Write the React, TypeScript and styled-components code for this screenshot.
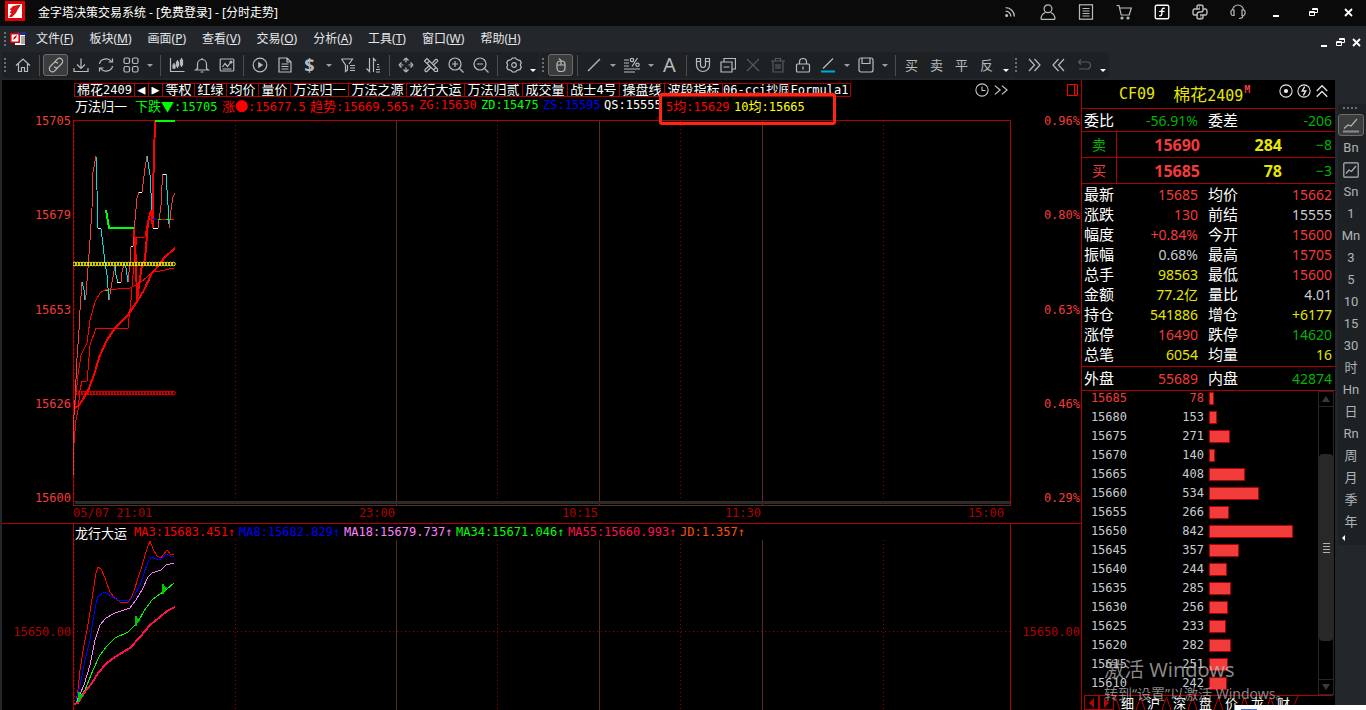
import React from "react";
import styled, { createGlobalStyle, css } from "styled-components";
import { SquareFunction } from "lucide-react";

const CJK = '"Noto Sans CJK SC", sans-serif';
const UI = `"Noto Sans", ${CJK}`;
const MONO = '"DejaVu Sans Mono", "Noto Sans CJK SC", monospace';

const color = {
  line: "#b00000",
  brown: "#5a2d20",
  red: "#f23c3c",
  pure: "#ff0000",
  green: "#00b400",
  lime: "#00ff00",
  yellow: "#e6e600",
  white: "#ffffff",
  silver: "#c8ccd0",
  icon: "#b9bcbf",
  bar: "#23272b",
  group: "#1d2124",
};

const GlobalStyle = createGlobalStyle`
  *, *::before, *::after { box-sizing: border-box; }
  body { margin: 0; background: ${color.bar}; color: #fff; font-family: ${UI}; font-size: 12px; }
  button { font: inherit; color: inherit; background: none; border: 0; padding: 0; margin: 0; cursor: default; }
`;

/* ---------- shell ---------- */

const Shell = styled.div`
  position: relative;
  display: flex;
  flex-direction: column;
  height: 100vh;
  overflow: hidden;
`;

const TitleBar = styled.header`
  display: flex;
  align-items: center;
  height: 26px;
  flex: none;
  padding-left: 5px;
  background: #0a0a0a;
`;

const Title = styled.h1`
  margin: 0 auto 0 13px;
  font: 12px/24px ${UI};
`;

const Logo = styled.svg`
  width: 20px;
  height: 20px;
  margin-bottom: 4px;
`;

const WindowButton = styled.button<{ $w?: number; $bright?: boolean }>`
  display: flex;
  align-items: center;
  justify-content: center;
  width: ${(p) => p.$w ?? 38}px;
  height: 24px;
  margin-bottom: 2px;
  color: ${(p) => (p.$bright ? "#fff" : "#b9bcbf")};
`;

const MenuBar = styled.nav`
  display: flex;
  align-items: center;
  flex: none;
  height: 26px;
  padding: 0 2px;
`;

const MenuItem = styled.button`
  font: 12px/24px ${UI};
  color: #e4e6e8;
  margin-right: 16px;
  white-space: nowrap;
`;

const MenuIcon = styled.svg`
  width: 16px;
  height: 14px;
  margin-right: 10px;
`;

const MdiButtons = styled.div`
  display: flex;
  margin-left: auto;
  padding-top: 7px;
`;

const Toolbar = styled.div`
  display: flex;
  flex: none;
  gap: 1px;
  height: 28px;
  padding-left: 2px;
`;

const ToolGroup = styled.div`
  display: flex;
  align-items: center;
  height: 26px;
  border-radius: 4px;
  background: ${color.group};
`;

const Grip = styled.span`
  flex: none;
  width: 8px;
  height: 14px;
  background: radial-gradient(circle at 3px 1px, #6c7073 1px, transparent 1px) 0 0 / 8px 4px repeat-y;
`;

const ToolButton = styled.button<{ $active?: boolean; $dim?: boolean }>`
  display: flex;
  align-items: center;
  justify-content: center;
  flex: none;
  width: 25px;
  height: 22px;
  color: ${(p) => (p.$dim ? "#565a5d" : color.icon)};
  ${(p) =>
    p.$active &&
    css`
      background: #3b3c3c;
      border: 1px solid #6c6c6c;
      border-radius: 3px;
    `}
`;

const TextTool = styled(ToolButton)<{ $size?: number; $bold?: boolean }>`
  font: ${(p) => (p.$bold ? 700 : 400)} ${(p) => p.$size ?? 13}px/22px ${UI};
`;

const CaretButton = styled.button<{ $low?: boolean }>`
  display: flex;
  align-items: ${(p) => (p.$low ? "flex-end" : "center")};
  justify-content: center;
  flex: none;
  width: 13px;
  height: 20px;
  &::after {
    content: "";
    border: 3px solid transparent;
    border-top-color: ${(p) => (p.$low ? "#fff" : "#9da0a3")};
    border-bottom: 0;
    margin-bottom: ${(p) => (p.$low ? 3 : 0)}px;
  }
`;

const Divider = styled.span`
  flex: none;
  width: 8px;
  height: 21px;
  background: linear-gradient(#4a4d50, #4a4d50) center / 1px 100% no-repeat;
`;

const Workspace = styled.div`
  display: flex;
  flex: 1;
  min-height: 0;
  padding-left: 2px;
`;

/* ---------- charts ---------- */

const ChartColumn = styled.main`
  display: flex;
  flex-direction: column;
  flex: 1;
  min-width: 0;
  background: #000;
  font: 12px/14px ${MONO};
`;

const TabStrip = styled.div`
  display: flex;
  align-items: center;
  height: 18px;
  flex: none;
  padding: 2px 2px 0 72px;
`;

const FormulaTab = styled.button<{ $w: number }>`
  flex: none;
  width: ${(p) => p.$w}px;
  height: 14px;
  overflow: hidden;
  border: 1px solid ${color.line};
  border-left-width: 0;
  color: #fff;
  font: 13px/12px ${MONO};
  text-align: center;
  white-space: nowrap;
  &:first-child {
    border-left-width: 1px;
  }
`;

const Latin = styled.span`
  font: 12px/12px ${MONO};
`;

const ToolIcon = styled.button<{ $light?: boolean }>`
  display: flex;
  align-items: center;
  height: 13px;
  color: ${(p) => (p.$light ? "#e8e8e8" : "#c8c8c8")};
`;

const TabTools = styled.div`
  display: flex;
  align-items: center;
  gap: 5px;
  margin-left: auto;
  padding-right: 59px;
`;

const LegendRow = styled.div`
  display: flex;
  flex: none;
  height: 16px;
  padding-left: 73px;
  white-space: nowrap;
`;

const LegendItem = styled.span<{ $w: number; $c: string }>`
  flex: none;
  width: ${(p) => p.$w}px;
  color: ${(p) => p.$c};
  font: 12px/15px ${MONO};
`;

const Han = styled.span`
  font: 13px/15px ${CJK};
`;

const Plot = styled.section`
  display: grid;
  grid-template-columns: 71px minmax(0, 1fr) 70px;
  flex: none;
`;

const Scale = styled.div<{ $end?: boolean }>`
  display: flex;
  flex-direction: column;
  justify-content: space-between;
  align-items: flex-end;
  height: 391px;
  padding-right: ${(p) => (p.$end ? 1 : 2)}px;
  color: ${color.red};
`;

const LowerScale = styled.div<{ $end?: boolean }>`
  padding: 101px ${(p) => (p.$end ? 1 : 2)}px 0 0;
  text-align: right;
  color: ${color.line};
`;

const UpperSvg = styled.svg`
  display: block;
  width: 100%;
  height: 392px;
`;

const LowerSvg = styled.svg`
  display: block;
  width: 100%;
  height: 170px;
`;

const LowerFrame = styled.div`
  border: solid ${color.line};
  border-width: 0 1px;
`;

const LowerPlot = styled(Plot)`
  border-top: 1px solid ${color.line};
`;

const LowerLegend = styled(LegendRow)`
  padding: 1px 0 0 1px;
`;

const TimeAxis = styled.div`
  display: grid;
  grid-template-columns: 322fr 203fr 163fr 243fr 7fr;
  flex: none;
  height: 17px;
  margin: 0 70px 0 71px;
  color: ${color.line};
  text-align: right;
  line-height: 15px;
`;

const TimeSpan = styled.div`
  display: flex;
  justify-content: space-between;
`;

/* ---------- quote panel ---------- */

const QuotePanel = styled.aside`
  display: flex;
  flex-direction: column;
  flex: none;
  width: 254px;
  background: #000;
  border-left: 1px solid ${color.line};
`;

const QuoteHead = styled.div`
  display: flex;
  align-items: flex-start;
  height: 29px;
  flex: none;
  padding: 4px 6px 0 37px;
  border-bottom: 1px solid ${color.line};
  color: ${color.yellow};
  font: 15px/20px ${MONO};
`;

const QuoteName = styled.span`
  margin-left: 18px;
  white-space: nowrap;
`;

const BigHan = styled.span`
  font: 17px/20px ${CJK};
`;

const MainMark = styled.sup`
  color: ${color.red};
  font: 700 10px/10px ${MONO};
  margin: 1px 0 0 1px;
`;

const HeadTools = styled.div`
  display: flex;
  gap: 4px;
  margin-left: auto;
`;

const QuoteTable = styled.table<{ $pad?: number }>`
  width: 100%;
  flex: none;
  table-layout: fixed;
  border-collapse: separate;
  border-spacing: 0;
  border-bottom: 1px solid ${color.line};
  padding: 0 0 ${(p) => p.$pad ?? 0}px;
`;

const Label = styled.th<{ $h: number; $second?: boolean }>`
  width: ${(p) => (p.$second ? 52 : 44)}px;
  height: ${(p) => p.$h}px;
  padding: 0 0 0 ${(p) => (p.$second ? 10 : 2)}px;
  color: #fff;
  font: 15px/20px ${CJK};
  text-align: left;
  white-space: nowrap;
`;

const Value = styled.td<{ $c: string; $end?: boolean }>`
  padding: 1px ${(p) => (p.$end ? 3 : 0)}px 0 0;
  width: ${(p) => (p.$end ? "auto" : "72px")};
  color: ${(p) => p.$c};
  font: 14px/18px ${UI};
  text-align: right;
  white-space: nowrap;
`;

const Side = styled.th<{ $c: string }>`
  width: 35px;
  height: 25px;
  padding: 0 0 2px;
  border-right: 1px solid ${color.line};
  color: ${(p) => p.$c};
  font: 14px/20px ${CJK};
`;

const Price = styled.td<{ $c: string; $w: number }>`
  width: ${(p) => p.$w}px;
  padding: 0;
  color: ${(p) => p.$c};
  font: 700 16px/20px ${UI};
  text-align: right;
`;

const DepthArea = styled.div`
  display: flex;
  flex: 1;
  min-height: 0;
  overflow: hidden;
`;

const DepthClip = styled.div`
  display: flex;
  align-items: flex-end;
  flex: 1;
  overflow: hidden;
  padding-bottom: 2px;
`;

const DepthTable = styled.table`
  width: 100%;
  table-layout: fixed;
  border-collapse: collapse;
  font: 12px/19px ${MONO};
`;

const DepthCell = styled.td<{ $w?: number; $c: string }>`
  width: ${(p) => (p.$w ? `${p.$w}px` : "auto")};
  height: 19px;
  padding: 0 0 0 5px;
  color: ${(p) => p.$c};
  text-align: right;
  &:first-child {
    padding-left: 0;
  }
`;

const DepthBar = styled.div`
  height: 13px;
  border: 1px solid ${color.line};
  background: ${color.red};
`;

const ScrollTrack = styled.div`
  display: flex;
  flex-direction: column;
  flex: none;
  width: 16px;
  margin-right: 1px;
  border: 1px solid #262626;
`;

const ScrollButton = styled.button<{ $down?: boolean }>`
  display: flex;
  align-items: center;
  justify-content: center;
  flex: none;
  height: 15px;
  border: 0 solid #262626;
  border-width: ${(p) => (p.$down ? "1px 0 0" : "0 0 1px")};
  &::after {
    content: "";
    border: 4px solid transparent;
    ${(p) => (p.$down ? "border-top: 6px solid #3a3a3a; border-bottom: 0;" : "border-bottom: 6px solid #3a3a3a; border-top: 0;")}
  }
`;

const ScrollRail = styled.div`
  display: flex;
  flex-direction: column;
  flex: 1;
  padding: 47px 0 38px;
`;

const Thumb = styled.div`
  display: flex;
  align-items: center;
  justify-content: center;
  flex: 1;
  border-radius: 4px;
  background: #282828;
  &::after {
    content: "";
    width: 7px;
    height: 10px;
    background: repeating-linear-gradient(#b0b0b0 0 1px, transparent 1px 3px);
  }
`;

const SheetTabs = styled.div`
  display: flex;
  flex: none;
  height: 15px;
  margin: 0 2px;
  border-top: 1px solid ${color.line};
  overflow: hidden;
`;

const SheetArrow = styled.button<{ $right?: boolean }>`
  display: flex;
  align-items: center;
  justify-content: center;
  flex: none;
  width: 15px;
  border: 1px solid ${color.line};
  border-top: 0;
  &::after {
    content: "";
    border: 5px solid transparent;
    ${(p) => (p.$right ? "border-left-color: #c00000; border-right: 0;" : "border-right-color: #c00000; border-left: 0;")}
  }
`;

const SheetTab = styled.button`
  flex: none;
  width: 13px;
  font: 13px/14px ${CJK};
`;

const SheetEdge = styled.svg<{ $w?: number }>`
  flex: none;
  width: ${(p) => p.$w ?? 13}px;
  height: 14px;
`;

/* ---------- period sidebar ---------- */

const SideBar = styled.nav`
  flex: none;
  width: 31px;
  padding: 24px 0 0 3px;
  background: ${color.bar};
`;

const PeriodGroup = styled.div`
  display: flex;
  flex-direction: column;
  height: 441px;
  border-radius: 4px 0 0 4px;
  background: ${color.group};
`;

const PeriodGrip = styled.span`
  flex: none;
  width: 16px;
  height: 4px;
  margin: 2px 0 4px 5px;
  background: radial-gradient(circle at 1px 2px, #6c7073 1px, transparent 1px) 0 0 / 4px 4px repeat-x;
`;

const Period = styled.button<{ $active?: boolean }>`
  display: flex;
  align-items: center;
  justify-content: center;
  flex: none;
  width: 26px;
  height: 22px;
  padding-top: 1px;
  color: #b0b3b6;
  font: 13px/21px Roboto, ${CJK};
  ${(p) =>
    p.$active &&
    css`
      padding: 0;
      background: #3b3c3c;
      border: 1px solid #6c6c6c;
      border-radius: 3px;
    `}
`;

const Collapse = styled.button`
  align-self: flex-start;
  width: 8px;
  height: 11px;
  margin-left: 4px;
  &::after {
    content: "";
    display: block;
    width: 0;
    border: 3px solid transparent;
    border-right-color: #fff;
    border-left: 0;
  }
`;

/* ---------- overlays ---------- */

const Highlight = styled.div`
  position: absolute;
  left: 659px;
  top: 93px;
  width: 177px;
  height: 32px;
  border: 3px solid #ff2414;
  border-radius: 3px;
  pointer-events: none;
`;

const Watermark = styled.div`
  position: absolute;
  right: 72px;
  bottom: 5px;
  width: 190px;
  color: rgba(190, 190, 190, 0.72);
  font: 14px/22px ${UI};
  white-space: nowrap;
  pointer-events: none;
`;

const WatermarkTitle = styled.div`
  font: 20px/26px ${UI};
`;

const Popup = styled.div`
  position: absolute;
  right: 0;
  bottom: 0;
  width: 131px;
  height: 5px;
  padding: 4px 0 0 6px;
  background: #fff;
  &::after {
    content: "";
    display: block;
    width: 16px;
    height: 1px;
    background: #2f6fed;
  }
`;

/* ---------- icons ---------- */

const Glyph = ({ size = 16, w = 1.2, children }: { size?: number; w?: number; children: React.ReactNode }) => (
  <svg width={size} height={size} viewBox="0 0 16 16" fill="none" stroke="currentColor" strokeWidth={w} aria-hidden="true">
    {children}
  </svg>
);

const icons: Record<string, React.ReactNode> = {
  home: <path d="M1 8.500 8 2l7 6.500M3.500 7v7.500H6.500v-4h3v4h3V7" />,
  link: (
    <g strokeLinecap="round">
      <path d="M7 4.500 9.300 2.200a3 3 0 0 1 4.500 4.300L10.500 9.800a3 3 0 0 1-4 .2" />
      <path d="M9 11.500 6.700 13.800a3 3 0 0 1-4.500-4.300L5.500 6.200a3 3 0 0 1 4-.2" />
    </g>
  ),
  download: <path d="M8 1.500v9.500M4 7.500l4 4 4-4M1 11v3.500h14V11" />,
  refresh: <path d="M1.500 7A6.500 5.500 0 0 1 13.500 4.500M14.500 1.500v3.500h-4M14.500 9A6.500 5.500 0 0 1 2.500 11.500M1.500 14.500V11h4" />,
  grid: (
    <>
      <rect x="1" y="1" width="5.500" height="5.500" rx="1.500" />
      <rect x="9.500" y="1" width="5.500" height="5.500" rx="1.500" />
      <rect x="1" y="9.500" width="5.500" height="5.500" rx="1.500" />
      <rect x="9.500" y="9.500" width="5.500" height="5.500" rx="1.500" />
    </>
  ),
  candles: (
    <>
      <path d="M1.500 1v13.500H15.500M5 6v6M8.500 3v8M12.500 1v9" />
      <path d="M4 8h2v3H4zM7.500 5h2v4h-2zM11.500 3h2v5h-2z" fill="currentColor" />
    </>
  ),
  bell: <path d="M3.500 11.500V7a4.500 4.500 0 0 1 9 0v4.500l2 1.500h-13zM6.500 15h3M8 1v1.500" />,
  chartBox: (
    <>
      <rect x="1.200" y="2" width="13.600" height="12" rx="1" />
      <path d="M3.500 10 6 6.500l2.500 3L12 5M3.500 12h9" />
      <circle cx="12" cy="5" r="1" fill="currentColor" />
    </>
  ),
  play: (
    <>
      <circle cx="8" cy="8" r="6.800" />
      <path d="M6.200 4.800v6.400L11.200 8z" fill="currentColor" stroke="none" />
    </>
  ),
  doc: <path d="M2 1h8l4 4v10H2zM10 1v4h4M4.500 7h7M4.500 9.500h7M4.500 12h7" />,
  filter: <path d="M1.500 2h11L9 7M1.500 2 5.500 8v6.500l2-1.500V8M10 8.500h5M10 11h5M10 13.500h5" />,
  sort: <path d="M4.500 1v13.500L1.500 11.500M8.500 15V1.500L11 4M12 7.500h2M12 10h2.500M11 12.500h4M11 15h4" />,
  move: (
    <>
      <path d="M8 1 5.500 3.500M8 1l2.500 2.500M8 15l-2.500-2.500M8 15l2.500-2.500M1 8l2.500-2.500M1 8l2.500 2.500M15 8l-2.500-2.500M15 8l-2.500 2.500" />
      <path d="M8 2v3.500M8 10.500V14M2 8h3.500M10.500 8H14" />
    </>
  ),
  pencils: (
    <>
      <path d="M1.500 4 4 1.500 14.500 12v2.500H12zM4 6.500 6 4.500M10.500 13l2.500-2.500" />
      <path d="M9.500 6 12.500 2.500a1.500 1.500 0 0 1 2 2L10.500 8M6.500 8.500 2 12.500a1.500 1.500 0 0 0 2 2L8 10" />
    </>
  ),
  zoomIn: <><circle cx="7" cy="7" r="6" /><path d="M11.500 11.500 15.500 15.500M4 7h6M7 4v6" /></>,
  zoomOut: <><circle cx="7" cy="7" r="6" /><path d="M11.500 11.500 15.500 15.500M4 7h6" /></>,
  gear: (
    <>
      <path d="M5.500 2.200 6.500 1h3l1 1.200 2 1 1.500.2 1.300 2.500-.8 1.300v1.600l.8 1.300-1.300 2.500-1.500.2-2 1-1 1.200h-3l-1-1.200-2-1L2 12.600.7 10.100l.8-1.300V7.200L.7 5.900 2 3.400l1.500-.2z" strokeLinejoin="round" />
      <circle cx="8" cy="8" r="2.300" />
    </>
  ),
  mouse: <><rect x="4" y="4" width="8" height="10.500" rx="3.500" /><path d="M8 4v4M4 8h8M8 4c0-2-1.500-1-2-2.500" /></>,
  line: <path d="M2 14 14 2" />,
  percent: (
    <>
      <path d="M0 3h5M0 6h5M0 9h5M0 12h16M0 15h11M13.500 1 8 9.500" />
      <circle cx="8" cy="3" r="1.700" />
      <circle cx="13.500" cy="7.800" r="1.700" />
    </>
  ),
  magnet: <path d="M1.500 1.500h4V8a2.500 2.500 0 0 0 5 0V1.500h4V8a6.500 6.500 0 0 1-13 0zM1.500 4.500h4M10.500 4.500h4" />,
  layers: <path d="M1 5h11v10H1zM4 5V1.500h11.500V12H12M3.500 10h6" />,
  cross: <path d="M2 2l12 12M14 2 2 14" />,
  trash: <path d="M1 4h14M5.500 4V1.500h5V4M3 4v11h10V4M6 7v5M8 7v5M10 7v5" />,
  lock: <><rect x="1.500" y="7" width="13" height="8" rx="1" /><path d="M4.500 7V5a3.500 3.500 0 0 1 7 0v2M8 9.500v3" /></>,
  pen: <><path d="M3 11.500 13 1.500" /><path d="M1 14.500h14" stroke="#00a8e0" strokeWidth="2" /></>,
  save: <><rect x="1" y="1" width="14" height="14" rx="2" /><path d="M4 1v5.500h8V1" /></>,
  right: <path d="M3 2l5.500 6L3 14M8.500 2 14 8l-5.500 6" />,
  left: <path d="M13 2 7.500 8l5.500 6M7.500 2 2 8l5.500 6" />,
  undo: <path d="M5 2.500 2.500 5 5 7.500M2.500 5H11a3.500 3.500 0 0 1 0 7H3" />,
  rss: <><path d="M3 3a10 10 0 0 1 10 10M3 7a6 6 0 0 1 6 6" /><circle cx="4.200" cy="12" r="1" fill="currentColor" /></>,
  user: <><circle cx="8" cy="4.800" r="3.900" /><path d="M1 15.300c0-4 2-6 4.500-6.800M15 15.300c0-4-2-6-4.500-6.800M1 15.300h14" /></>,
  list: <><rect x="1.500" y=".8" width="13" height="14.400" /><path d="M4.500 4.500h7M4.500 7h7M4.500 9.500h7M4.500 12h7" /></>,
  cart: <><path d="M.5 1.500H3l2.200 9.500h8L15.300 4H4" /><circle cx="6" cy="14" r="1" fill="currentColor" /><circle cx="12" cy="14" r="1" fill="currentColor" /></>,
  python: (
    <>
      <path d="M5 5V2.500C5 1 6 1 8 1s3 .3 3 1.500v4C11 8 10 8 8.500 8h-1C5.500 8 5 9 5 11H2.500C1 11 1 10 1 8s.3-3 1.500-3H8" />
      <path d="M11 11v2.500C11 15 10 15 8 15s-3-.3-3-1.500V11M11 5h2.500C15 5 15 6 15 8s-.3 3-1.500 3H8" />
      <path d="M7 3h.8M8.500 13h.8" />
    </>
  ),
  headset: <path d="M2.500 6.500a5.500 5.500 0 0 1 11 0M2 6h2v5.500H2.800A2 2 0 0 1 1 9.500v-2A1.500 1.500 0 0 1 2 6zM14 6h-2v5.500h1.200a2 2 0 0 0 1.800-2v-2A1.500 1.500 0 0 0 14 6zM13 11.500c0 2-2 3-4 3" />,
  clock: <><circle cx="8" cy="8" r="7" /><path d="M8 4v4.500h4" /></>,
  target: <><circle cx="8" cy="8" r="7" /><circle cx="8" cy="8" r="1.800" fill="currentColor" /></>,
  bolt: <><circle cx="8" cy="8" r="7" /><path d="M8.800 3 6 8h4L7.200 13" strokeWidth="1.600" /></>,
  up: <path d="M2 8l6-6 6 6M2 14.500l6-6 6 6" />,
  next: <path d="M1 3l6 5-6 5M9 3l6 5-6 5" />,
  trend: <><path d="M1 11.500 5 8l3 1 6-7" /><path d="M0 14.500h16" strokeWidth="2" stroke="#8a8d90" /></>,
  trendBox: <><rect x=".8" y=".8" width="14.400" height="14.400" rx="1" /><path d="M3 11.500 6 8l2.500 1.500L13 4" /></>,
};

const Tool = ({ name, label, active, dim }: { name: string; label: string; active?: boolean; dim?: boolean }) => (
  <ToolButton $active={active} $dim={dim} aria-label={label}>
    <Glyph>{icons[name]}</Glyph>
  </ToolButton>
);

const MinimizeMark = () => (
  <svg width="8" height="10" aria-hidden="true"><path d="M1 8h6v2H1z" fill="#fff" /></svg>
);
const RestoreMark = () => (
  <svg width="9" height="10" fill="none" stroke="#fff" aria-hidden="true">
    <path d="M.5 4.500h5v4h-5zM0 5.500h6M3.500 3V1.500h5v4H6M3 2.500h6" />
  </svg>
);
const CloseMark = () => (
  <svg width="9" height="10" stroke="#fff" strokeWidth="1.800" aria-hidden="true"><path d="M1 2l7 7M8 2 1 9" /></svg>
);

/* ---------- data ---------- */

const menus = [["文件", "F"], ["板块", "M"], ["画面", "P"], ["查看", "V"], ["交易", "O"], ["分析", "A"], ["工具", "T"], ["窗口", "W"], ["帮助", "H"]];

const formulaTabs: [React.ReactNode, number][] = [
  [<>棉花<Latin>2409</Latin></>, 61], ["◀", 14], ["▶", 14], ["等权", 32], ["红绿", 32], ["均价", 32], ["量价", 32], ["万法归一", 58],
  ["万法之源", 58], ["龙行大运", 58], ["万法归贰", 58], ["成交量", 45], [<>战士<Latin>4</Latin>号</>, 52], ["操盘线", 45], ["波段指标", 58],
  [<Latin>06-cci抄底</Latin>, 66], [<Latin>Formula1</Latin>, 62],
];

type QuoteLine = [string, string, string, string, string, string];
const quotes: QuoteLine[] = [
  ["最新", "15685", color.red, "均价", "15662", color.red],
  ["涨跌", "130", color.red, "前结", "15555", color.silver],
  ["幅度", "+0.84%", color.red, "今开", "15600", color.red],
  ["振幅", "0.68%", color.silver, "最高", "15705", color.red],
  ["总手", "98563", color.yellow, "最低", "15600", color.red],
  ["金额", "77.2亿", color.yellow, "量比", "4.01", color.silver],
  ["持仓", "541886", color.yellow, "增仓", "+6177", color.yellow],
  ["涨停", "16490", color.red, "跌停", "14620", color.green],
  ["总笔", "6054", color.yellow, "均量", "16", color.yellow],
];

const depth: [number, number, number][] = [
  [15685, 78, 5], [15680, 153, 8], [15675, 271, 21], [15670, 140, 6], [15665, 408, 36], [15660, 534, 50],
  [15655, 266, 20], [15650, 842, 84], [15645, 357, 30], [15640, 244, 18], [15635, 285, 22], [15630, 256, 19],
  [15625, 233, 17], [15620, 282, 22], [15615, 251, 19], [15610, 242, 18],
];

const periods = ["Bn", "#", "Sn", "1", "Mn", "3", "5", "10", "15", "30", "时", "Hn", "日", "Rn", "周", "月", "季", "年"];

const priceSegments: [string, string][] = [
  [color.red, "73,475 73,430 75,400 77,358 79,330 80,310 81,296 82,282"],
  ["#00e0e0", "82,282 84,290 85,300"],
  [color.red, "85,300 86,295 88,268 90,240 92,208 93,172 96,156"],
  ["#00e0e0", "96,156 97,190 98,228"],
  [color.white, "98,228 101,228"],
  ["#00e0e0", "101,229 103,245 105,263 107,275 109,300"],
  [color.red, "109,300 112,282 115,266"],
  ["#00e0e0", "115,266 116,275 118,282"],
  [color.white, "117,282 121,282"],
  [color.red, "121,282 122,272 124,264"],
  ["#00e0e0", "124,264 126,268 128,282"],
  [color.red, "128,282 130,262 131,247"],
  [color.white, "131,246 133,246"],
  [color.red, "133,246 135,220 137,198 139,192"],
  [color.white, "139,192 142,192"],
  [color.red, "142,192 145,168 147,156"],
  ["#00e0e0", "147,156 150,175 152,210 153,228"],
  [color.white, "153,228 158,228"],
  [color.red, "158,228 161,205 162,185 163,174"],
  [color.white, "163,174 166,174"],
  ["#00e0e0", "166,174 168,205 169,224"],
  [color.red, "169,228 171,210 173,197 175,193"],
];

const maLines: [string, number, string][] = [
  ["#ff0000", 1, "76,702 78,690 80,670 84,645 87,630 90,612 93,592 96,573 98,567 101,569 105,578 110,592 114,597 120,602 128,602 131,598 134,591 138,578 142,566 145,555 148,546 150,541 153,549 157,556 161,558 163,555 167,550 171,555 174,554"],
  ["#0000ff", 1, "76,702 80,685 85,660 90,640 93,620 96,604 98,597 104,592 108,594 114,598 120,601 130,600 134,596 140,585 144,573 148,562 151,557 156,559 161,560 166,554 170,556 174,556"],
  ["#ff80ff", 1, "76,703 84,685 90,665 95,640 100,625 106,618 115,613 130,608 136,600 142,590 148,577 152,573 161,570 166,565 174,563"],
  ["#00ff00", 1, "76,703 85,690 93,670 100,655 107,646 115,638 128,632 138,622 144,611 152,600 160,594 166,590 174,583"],
  ["#ff1050", 2, "74,704 78,703 84,693 92,683 98,673 107,663 118,655 130,648 140,637 150,625 160,617 167,611 175,607"],
];

const dotted = [235, 497, 680, 883];
const solid = [396, 599, 762];

const VerticalGrid = ({ top, bottom }: { top: number; bottom: number }) => (
  <g shapeRendering="crispEdges">
    {[74, ...dotted].map((x) => (
      <path key={x} d={`M${x + 0.5} ${top}V${bottom}`} stroke="#a00000" strokeDasharray="1 3" />
    ))}
    {solid.map((x) => (
      <path key={x} d={`M${x + 0.5} ${top}V${bottom}`} stroke={color.brown} />
    ))}
  </g>
);

const Rings = ({ y, from, stroke }: { y: number; from: number; stroke: string }) => (
  <g fill="none" stroke={stroke}>
    {Array.from({ length: Math.floor((176 - from) / 3) }, (_, i) => (
      <circle key={i} cx={from + 1.5 + i * 3} cy={y} r="1.800" />
    ))}
  </g>
);

const UpperChart = () => (
  <UpperSvg viewBox="73 114 938 392" preserveAspectRatio="none" role="img" aria-label="分时走势">
    <VerticalGrid top={121} bottom={505} />
    <path d="M75 501h935v3H75z" fill="#2b2b2b" />
    <path d="M73 505.500h938" stroke={color.brown} />
    <path d="M73.500 505V120.500H1010.500V505" fill="none" stroke={color.line} />
    <g fill="none" shapeRendering="crispEdges">
      <polyline stroke="#ff0000" points="74,443 76,420 78,410 80,390 82,381 87,381 88,370 90,345 96,328 128,328 129,318 131,300 134,263 137,237 145,237 147,225" />
      <polyline stroke="#ff0000" points="75,405 78,375 81,355 87,343 90,320 95,302 100,293 105,290 130,288 140,283 147,277 153,272 160,271 174,268" />
      <polyline stroke="#ff0000" strokeWidth="2" points="75,408 80,404 88,391 94,375 100,355 107,340 115,328 128,315 138,300 144,290 152,273 160,264 164,258 175,248" />
      {priceSegments.map(([c, pts], i) => (
        <polyline key={i} stroke={c} points={pts} />
      ))}
      <polyline stroke="#ff0000" strokeWidth="2" points="134,228 136,263 137,300 142,265 145,260 148,222 151,210 153,228 153,190 154,157 155,121" />
      <polyline stroke={color.lime} strokeWidth="2" points="106,210 109,228 134,228" />
      <path d="M155 121h20" stroke={color.lime} strokeWidth="2" />
      <path d="M150 219.500h24" stroke="#ff0000" />
      <path d="M152 219.500h6" stroke="#0000ff" />
      <path d="M158 219.500h3M166 219.500h5M105 290.500h3" stroke={color.lime} />
    </g>
    <Rings y={264} from={73} stroke="#ffff00" />
    <Rings y={393} from={76} stroke="#ff0000" />
  </UpperSvg>
);

const LowerChart = () => (
  <LowerSvg viewBox="74 540 936 170" preserveAspectRatio="none" role="img" aria-label="龙行大运">
    <VerticalGrid top={540} bottom={710} />
    <path d="M77 631.500H1010" stroke="#a00000" strokeDasharray="1 3" shapeRendering="crispEdges" />
    <g fill="none" shapeRendering="crispEdges">
      {maLines.map(([c, w, pts]) => (
        <polyline key={c} stroke={c} strokeWidth={w} points={pts} />
      ))}
    </g>
    <g fill="#00c800">
      {[[78, 692], [135, 616], [162, 584]].map(([x, y]) => (
        <path key={x} d={`M${x} ${y}h2v2l4 2-4 3v3h-2z`} />
      ))}
    </g>
  </LowerSvg>
);

const upperLegend: [React.ReactNode, number, string][] = [
  [<Han>万法归一</Han>, 60, color.white],
  [<><Han>下跌▼</Han>:15705</>, 87, color.lime],
  [<><Han>涨●</Han>:15677.5</>, 88, color.pure],
  [<><Han>趋势</Han>:15669.565↑</>, 109, color.pure],
  ["ZG:15630", 62, color.pure],
  ["ZD:15475", 62, color.lime],
  ["ZS:15595", 61, "#0000ff"],
  ["QS:15555", 62, color.white],
  [<>5<Han>均</Han>:15629</>, 68, color.pure],
  [<>10<Han>均</Han>:15665</>, 80, "#ffff00"],
];

const lowerLegend: [React.ReactNode, number, string][] = [
  [<Han>龙行大运</Han>, 59, color.white],
  ["MA3:15683.451↑", 105, color.pure],
  ["MA8:15682.829↑", 105, "#0000ff"],
  ["MA18:15679.737↑", 112, "#ff80ff"],
  ["MA34:15671.046↑", 112, color.lime],
  ["MA55:15660.993↑", 112, "#ff1050"],
  ["JD:1.357↑", 80, "#ff5000"],
];

const QuoteRow = ({ row, h = 20 }: { row: QuoteLine; h?: number }) => (
  <tr>
    <Label scope="row" $h={h}>{row[0]}</Label>
    <Value $c={row[2]}>{row[1]}</Value>
    <Label scope="row" $h={h} $second>{row[3]}</Label>
    <Value $c={row[5]} $end>{row[4]}</Value>
  </tr>
);

const OrderRow = ({ side, c, price, volume, change }: { side: string; c: string; price: string; volume: string; change: string }) => (
  <QuoteTable>
    <tbody>
      <tr>
        <Side scope="row" $c={c}>{side}</Side>
        <Price $c={color.red} $w={83}>{price}</Price>
        <Price $c={color.yellow} $w={82}>{volume}</Price>
        <Value $c={color.green} $end>{change}</Value>
      </tr>
    </tbody>
  </QuoteTable>
);

export default function App() {
  return (
    <Shell>
      <GlobalStyle />
      <TitleBar>
        <Logo viewBox="0 0 20 20" aria-hidden="true">
          <path d="M0 0h20v20H0z" fill="#e60000" />
          <path d="M3 3h14v14H3z" fill="#fff" />
          <path d="M4.500 8.500 8 5l8-1.500L12.500 9 11 12l-4 4H4l2.500-4H4.500l2-3z" fill="#d81414" />
        </Logo>
        <Title>金字塔决策交易系统 - [免费登录] - [分时走势]</Title>
        <WindowButton aria-label="资讯"><Glyph size={14} w={1.5}>{icons.rss}</Glyph></WindowButton>
        <WindowButton aria-label="用户"><Glyph>{icons.user}</Glyph></WindowButton>
        <WindowButton aria-label="列表"><Glyph>{icons.list}</Glyph></WindowButton>
        <WindowButton aria-label="商城"><Glyph>{icons.cart}</Glyph></WindowButton>
        <WindowButton aria-label="公式" $bright><SquareFunction size={18} strokeWidth={1.8} /></WindowButton>
        <WindowButton aria-label="Python"><Glyph w={1.4}>{icons.python}</Glyph></WindowButton>
        <WindowButton aria-label="客服"><Glyph>{icons.headset}</Glyph></WindowButton>
        <WindowButton aria-label="最小化"><MinimizeMark /></WindowButton>
        <WindowButton aria-label="还原" $w={36}><RestoreMark /></WindowButton>
        <WindowButton aria-label="关闭" $w={35}><CloseMark /></WindowButton>
      </TitleBar>

      <MenuBar>
        <Grip />
        <MenuIcon viewBox="0 0 16 14" aria-hidden="true">
          <path d="M5 1h10v12H5z" fill="#fff" />
          <path d="M5 0h11v3H5z" fill="#1b2f8a" />
          <path d="M11 5h4M11 7h4M11 9h4M11 11h4" stroke="#555" />
          <path d="M.8 1.800h8.400v8.400H.8z" fill="#fff" stroke="#e60000" strokeWidth="1.600" />
          <path d="M3 8l1-3 3-2-1 3z" fill="#e60000" />
        </MenuIcon>
        {menus.map(([name, key]) => (
          <MenuItem key={key}>{name}(<u>{key}</u>)</MenuItem>
        ))}
        <MdiButtons>
          <WindowButton $w={17} aria-label="最小化窗口"><MinimizeMark /></WindowButton>
          <WindowButton $w={17} aria-label="还原窗口"><RestoreMark /></WindowButton>
          <WindowButton $w={15} aria-label="关闭窗口"><CloseMark /></WindowButton>
        </MdiButtons>
      </MenuBar>

      <Toolbar>
        <ToolGroup>
          <Grip />
          <Tool name="home" label="主页" />
          <Divider />
          <Tool name="link" label="连接" active />
          <Tool name="download" label="下载" />
          <Tool name="refresh" label="刷新" />
          <Tool name="grid" label="版面" />
          <CaretButton aria-label="版面选项" />
          <Divider />
          <Tool name="candles" label="K线" />
          <Tool name="bell" label="预警" />
          <Tool name="chartBox" label="图表" />
          <Divider />
          <Tool name="play" label="运行" />
          <Tool name="doc" label="文档" />
          <TextTool $size={18} $bold>$</TextTool>
          <CaretButton aria-label="交易选项" />
          <Tool name="filter" label="筛选" />
          <Tool name="sort" label="排序" />
          <Divider />
          <Tool name="move" label="移动" />
          <Tool name="pencils" label="绘图" />
          <Tool name="zoomIn" label="放大" />
          <Tool name="zoomOut" label="缩小" />
          <Divider />
          <Tool name="gear" label="设置" />
          <CaretButton $low aria-label="更多工具" />
        </ToolGroup>
        <ToolGroup>
          <Grip />
          <Tool name="mouse" label="鼠标" active />
          <Divider />
          <Tool name="line" label="直线" />
          <CaretButton aria-label="直线选项" />
          <Tool name="percent" label="百分比线" />
          <CaretButton aria-label="百分比选项" />
          <TextTool $size={20}>A</TextTool>
          <Divider />
          <Tool name="magnet" label="磁铁" />
          <Tool name="layers" label="图层" />
          <Tool name="cross" label="取消" dim />
          <Tool name="trash" label="删除" dim />
          <Tool name="lock" label="锁定" />
          <Tool name="pen" label="颜色" />
          <CaretButton aria-label="颜色选项" />
          <Tool name="save" label="保存" />
          <CaretButton aria-label="保存选项" />
          <Divider />
          <TextTool>买</TextTool>
          <TextTool>卖</TextTool>
          <TextTool>平</TextTool>
          <TextTool>反</TextTool>
          <CaretButton $low aria-label="更多交易" />
        </ToolGroup>
        <ToolGroup>
          <Grip />
          <Tool name="right" label="前进" />
          <Tool name="left" label="后退" />
          <Tool name="undo" label="撤销" dim />
          <CaretButton $low aria-label="更多操作" />
        </ToolGroup>
      </Toolbar>

      <Workspace>
        <ChartColumn>
          <TabStrip>
            {formulaTabs.map(([name, w], i) => (
              <FormulaTab key={i} $w={w}>{name}</FormulaTab>
            ))}
            <TabTools>
              <ToolIcon aria-label="时间"><Glyph size={14}>{icons.clock}</Glyph></ToolIcon>
              <ToolIcon aria-label="更多"><Glyph size={14} w={1.400}>{icons.next}</Glyph></ToolIcon>
            </TabTools>
            <ToolIcon aria-label="面板">
              <svg width="12" height="13" fill="none" stroke="#ff0000" aria-hidden="true"><path d="M.5.5h10v11H.5zM7.500.5v11" /></svg>
            </ToolIcon>
          </TabStrip>
          <LegendRow>
            {upperLegend.map(([text, w, c], i) => (
              <LegendItem key={i} $w={w} $c={c}>{text}</LegendItem>
            ))}
          </LegendRow>
          <Plot>
            <Scale>{["15705", "15679", "15653", "15626", "15600"].map((v) => <span key={v}>{v}</span>)}</Scale>
            <UpperChart />
            <Scale $end>{["0.96%", "0.80%", "0.63%", "0.46%", "0.29%"].map((v) => <span key={v}>{v}</span>)}</Scale>
          </Plot>
          <TimeAxis>
            <TimeSpan><span>05/07 21:01</span><span>23:00</span></TimeSpan>
            <span>10:15</span>
            <span>11:30</span>
            <span>15:00</span>
          </TimeAxis>
          <LowerPlot>
            <LowerScale>15650.00</LowerScale>
            <LowerFrame>
              <LowerLegend>
                {lowerLegend.map(([text, w, c], i) => (
                  <LegendItem key={i} $w={w} $c={c}>{text}</LegendItem>
                ))}
              </LowerLegend>
              <LowerChart />
            </LowerFrame>
            <LowerScale $end>15650.00</LowerScale>
          </LowerPlot>
        </ChartColumn>

        <QuotePanel>
          <QuoteHead>
            <span>CF09</span>
            <QuoteName><BigHan>棉花</BigHan>2409</QuoteName>
            <MainMark>M</MainMark>
            <HeadTools>
              <ToolIcon $light aria-label="定位"><Glyph size={14}>{icons.target}</Glyph></ToolIcon>
              <ToolIcon $light aria-label="闪电"><Glyph size={14}>{icons.bolt}</Glyph></ToolIcon>
              <ToolIcon $light aria-label="收起"><Glyph size={14} w={1.500}>{icons.up}</Glyph></ToolIcon>
            </HeadTools>
          </QuoteHead>
          <QuoteTable>
            <tbody><QuoteRow h={22} row={["委比", "-56.91%", color.green, "委差", "-206", color.green]} /></tbody>
          </QuoteTable>
          <OrderRow side="卖" c={color.green} price="15690" volume="284" change="−8" />
          <OrderRow side="买" c={color.red} price="15685" volume="78" change="−3" />
          <QuoteTable $pad={2}>
            <tbody>{quotes.map((row) => <QuoteRow key={row[0]} row={row} />)}</tbody>
          </QuoteTable>
          <QuoteTable $pad={1}>
            <tbody><QuoteRow h={22} row={["外盘", "55689", color.red, "内盘", "42874", color.green]} /></tbody>
          </QuoteTable>
          <DepthArea>
            <DepthClip>
              <DepthTable>
                <tbody>
                  {depth.map(([price, volume, width], i) => (
                    <tr key={price}>
                      <DepthCell $w={45} $c={i ? color.silver : color.red}>{price}</DepthCell>
                      <DepthCell $w={77} $c={i ? color.silver : color.red}>{volume}</DepthCell>
                      <DepthCell $c={color.red}><DepthBar style={{ width }} /></DepthCell>
                    </tr>
                  ))}
                </tbody>
              </DepthTable>
            </DepthClip>
            <ScrollTrack>
              <ScrollButton aria-label="向上滚动" />
              <ScrollRail><Thumb /></ScrollRail>
              <ScrollButton $down aria-label="向下滚动" />
            </ScrollTrack>
          </DepthArea>
          <SheetTabs>
            <SheetArrow aria-label="上一页" />
            <SheetArrow $right aria-label="下一页" />
            <SheetEdge $w={7} viewBox="0 0 7 14" fill="none" stroke="#c00000"><path d="M1 0l5 14" /></SheetEdge>
            {["细", "沪", "深", "盘", "价", "龙", "财"].map((t) => (
              <React.Fragment key={t}>
                <SheetTab>{t}</SheetTab>
                <SheetEdge viewBox="0 0 13 14" fill="none" stroke="#c00000">
                  <path d={t === "财" ? "M2 14 8 0" : "M2 14 6.500 1 11 14"} />
                </SheetEdge>
              </React.Fragment>
            ))}
          </SheetTabs>
        </QuotePanel>

        <SideBar>
          <PeriodGroup>
            <PeriodGrip />
            <Period $active aria-label="分时"><Glyph>{icons.trend}</Glyph></Period>
            {periods.map((p) =>
              p === "#" ? (
                <Period key={p} aria-label="走势"><Glyph>{icons.trendBox}</Glyph></Period>
              ) : (
                <Period key={p}>{p}</Period>
              )
            )}
            <Collapse aria-label="折叠" />
          </PeriodGroup>
        </SideBar>
      </Workspace>

      <Highlight />
      <Watermark>
        <WatermarkTitle>激活 Windows</WatermarkTitle>
        转到“设置”以激活 Windows。
      </Watermark>
      <Popup />
    </Shell>
  );
}
